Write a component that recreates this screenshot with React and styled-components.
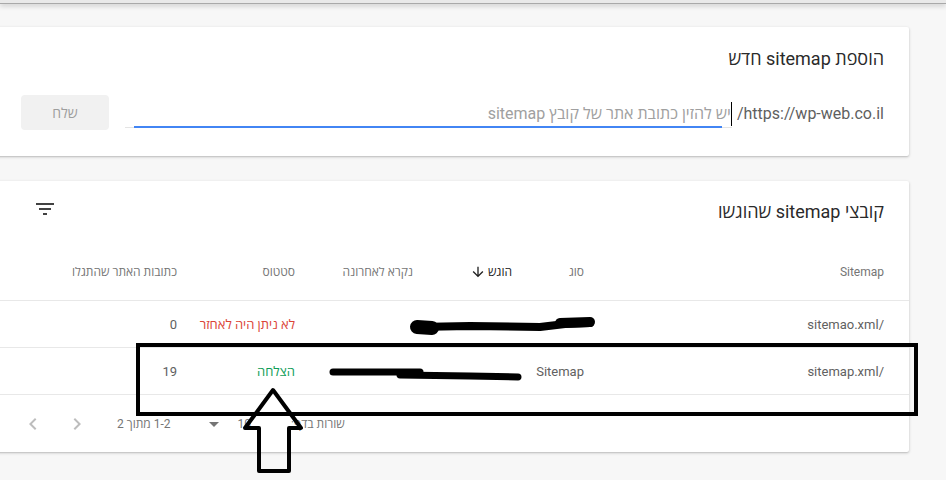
import React from "react";
import styled, { createGlobalStyle } from "styled-components";

const GlobalStyle = createGlobalStyle`
  html, body { margin: 0; padding: 0; }
  body {
    background: #f7f7f7;
    font-family: Roboto, "Open Sans", sans-serif;
    overflow: hidden;
  }
  * { box-sizing: border-box; }
`;

const Page = styled.div`
  position: relative;
  width: 946px;
  height: 480px;
  overflow: hidden;
  background: #f7f7f7;
`;

const TopBar = styled.div`
  height: 4px;
  background: #e9e9e9;
  border-bottom: 1px solid #a9a9a9;
  box-shadow: 0 2px 5px rgba(0, 0, 0, 0.18);
`;

const Main = styled.main`
  direction: rtl;
  display: flex;
  flex-direction: column;
  gap: 25px;
  width: 950px;
  margin-left: -4px;
  padding: 23px 37px 0 0;
`;

const Card = styled.section`
  background: #fff;
  border-radius: 2px;
  box-shadow: 0 1px 3px rgba(0, 0, 0, 0.22), 0 1px 1px rgba(0, 0, 0, 0.06);
  padding: ${(p) => p.$pad || "0"};
`;

const CardTitle = styled.h2`
  margin: 0;
  font-weight: 400;
  font-size: 18px;
  line-height: 24px;
  color: #2a2a2a;
`;

const InputRow = styled.div`
  display: flex;
  align-items: flex-start;
  margin-top: 24px;
  height: 35px;
`;

const Prefix = styled.span`
  font-size: 16px;
  line-height: 38px;
  color: #5f5f5f;
  white-space: nowrap;
  margin-left: 5px;
`;

const Field = styled.div`
  position: relative;
  flex: 1;
  height: 33px;
  padding-top: 6px;
  display: flex;
  align-items: center;
  border-bottom: 1px solid #e4e4e4;
  &::after {
    content: "";
    position: absolute;
    right: 10px;
    left: 9px;
    bottom: -1px;
    height: 2px;
    background: #4285f4;
  }
`;

const Placeholder = styled.span`
  font-size: 16px;
  line-height: 24px;
  color: #a0a0a0;
  white-space: nowrap;
  border-right: 1px solid #000;
`;

const SubmitButton = styled.button`
  width: 88px;
  height: 35px;
  margin-right: 16px;
  border: none;
  border-radius: 4px;
  background: #f1f1f1;
  color: #9e9e9e;
  font-family: inherit;
  font-size: 14px;
`;

const CardHeader = styled.div`
  height: 62px;
  display: flex;
  align-items: center;
  justify-content: space-between;
  padding: 0 25px 0 37px;
`;

const IconBox = styled.span`
  display: inline-flex;
  width: 24px;
  height: 24px;
  margin-bottom: ${(p) => p.$lift || 0}px;
  color: ${(p) => p.$color || "#424242"};
  svg { width: 24px; height: 24px; fill: currentColor; }
`;

const TableRow = styled.div`
  display: grid;
  grid-template-columns: 300px 72px 99px 118px 118px 1fr;
  align-items: center;
  height: ${(p) => (p.$head ? 58 : 47)}px;
  padding-right: 25px;
  border-bottom: 1px solid #e8e8e8;
`;

const HeadCell = styled.div`
  display: flex;
  align-items: center;
  gap: 2px;
  font-size: 12px;
  color: ${(p) => (p.$active ? "#212121" : "#757575")};
  white-space: nowrap;
  svg { width: 16px; height: 16px; fill: #212121; }
`;

const Cell = styled.div`
  font-size: 13px;
  color: ${(p) => p.$color || "#616161"};
  white-space: nowrap;
`;

const Footer = styled.div`
  height: 57px;
  display: flex;
  align-items: center;
  justify-content: flex-end;
  padding-left: 25px;
  font-size: 12px;
  color: #757575;
`;

const FooterText = styled.span`
  margin-left: ${(p) => p.$gap || 0}px;
  margin-right: ${(p) => p.$before || 0}px;
  white-space: nowrap;
`;

const NavButton = styled.span`
  display: inline-flex;
  width: 24px;
  height: 24px;
  margin-left: ${(p) => p.$gap || 0}px;
  svg { width: 24px; height: 24px; fill: #bdbdbd; }
`;

const Overlay = styled.svg`
  position: absolute;
  top: 0;
  left: 0;
  width: 946px;
  height: 480px;
  pointer-events: none;
`;

const FilterIcon = () => (
  <svg viewBox="0 0 24 24"><path d="M10 18h4v-2h-4v2zM3 6v2h18V6H3zm3 7h12v-2H6v2z" /></svg>
);
const ArrowDown = () => (
  <svg viewBox="0 0 24 24"><path d="M20 12l-1.41-1.41L13 16.17V4h-2v12.17l-5.58-5.59L4 12l8 8 8-8z" /></svg>
);
const ChevronLeft = () => (
  <svg viewBox="0 0 24 24"><path d="M15.41 7.41L14 6l-6 6 6 6 1.41-1.41L10.83 12z" /></svg>
);
const ChevronRight = () => (
  <svg viewBox="0 0 24 24"><path d="M8.59 16.59L10 18l6-6-6-6-1.41 1.41L13.17 12z" /></svg>
);
const DropDown = () => (
  <svg viewBox="0 0 24 24"><path d="M7 10l5 5 5-5z" /></svg>
);

const rows = [
  { path: "/sitemao.xml", type: "", status: "לא ניתן היה לאחזר", statusColor: "#db4437", count: "0" },
  { path: "/sitemap.xml", type: "Sitemap", status: "הצלחה", statusColor: "#0f9d58", count: "19" },
];

export default function App() {
  return (
    <Page>
      <GlobalStyle />
      <TopBar />
      <Main>
        <Card $pad="20px 25px 26px 25px">
          <CardTitle>הוספת sitemap חדש</CardTitle>
          <InputRow>
            <Prefix>https://wp-web.co.il/</Prefix>
            <Field>
              <Placeholder>יש להזין כתובת אתר של קובץ sitemap</Placeholder>
            </Field>
            <SubmitButton>שלח</SubmitButton>
          </InputRow>
        </Card>

        <Card>
          <CardHeader>
            <CardTitle>קובצי sitemap שהוגשו</CardTitle>
            <IconBox $lift={6}><FilterIcon /></IconBox>
          </CardHeader>
          <TableRow $head>
            <HeadCell>Sitemap</HeadCell>
            <HeadCell>סוג</HeadCell>
            <HeadCell $active>הוגש<ArrowDown /></HeadCell>
            <HeadCell>נקרא לאחרונה</HeadCell>
            <HeadCell>סטטוס</HeadCell>
            <HeadCell>כתובות האתר שהתגלו</HeadCell>
          </TableRow>
          {rows.map((r) => (
            <TableRow key={r.path}>
              <Cell>{r.path}</Cell>
              <Cell>{r.type}</Cell>
              <Cell />
              <Cell />
              <Cell $color={r.statusColor}>{r.status}</Cell>
              <Cell>{r.count}</Cell>
            </TableRow>
          ))}
          <Footer>
            <FooterText $gap={40}>שורות בדף:</FooterText>
            <FooterText $gap={12}>10</FooterText>
            <IconBox $color="#757575"><DropDown /></IconBox>
            <FooterText $before={31} $gap={28}>1-2 מתוך 2</FooterText>
            <NavButton $gap={20}><ChevronRight /></NavButton>
            <NavButton><ChevronLeft /></NavButton>
          </Footer>
        </Card>
      </Main>

      <Overlay viewBox="0 0 946 480">
        <g stroke="#000" fill="none" strokeLinecap="round" strokeLinejoin="round">
          <path d="M417 327 L470 326 L540 327 L565 324 L590 323" strokeWidth="8" />
          <path d="M417 327 L432 328" strokeWidth="14" />
          <path d="M560 323 L590 322" strokeWidth="10" />
          <path d="M333 372 L420 372" strokeWidth="7" />
          <path d="M400 375 L470 376 L518 377" strokeWidth="7" />
        </g>
        <rect x="138" y="345" width="778" height="69" fill="none" stroke="#000" strokeWidth="4" />
        <polygon
          points="273,390 301,428 289,428 289,471 259,471 259,428 245,428"
          fill="none"
          stroke="#000"
          strokeWidth="4"
          strokeLinejoin="round"
        />
      </Overlay>
    </Page>
  );
}
